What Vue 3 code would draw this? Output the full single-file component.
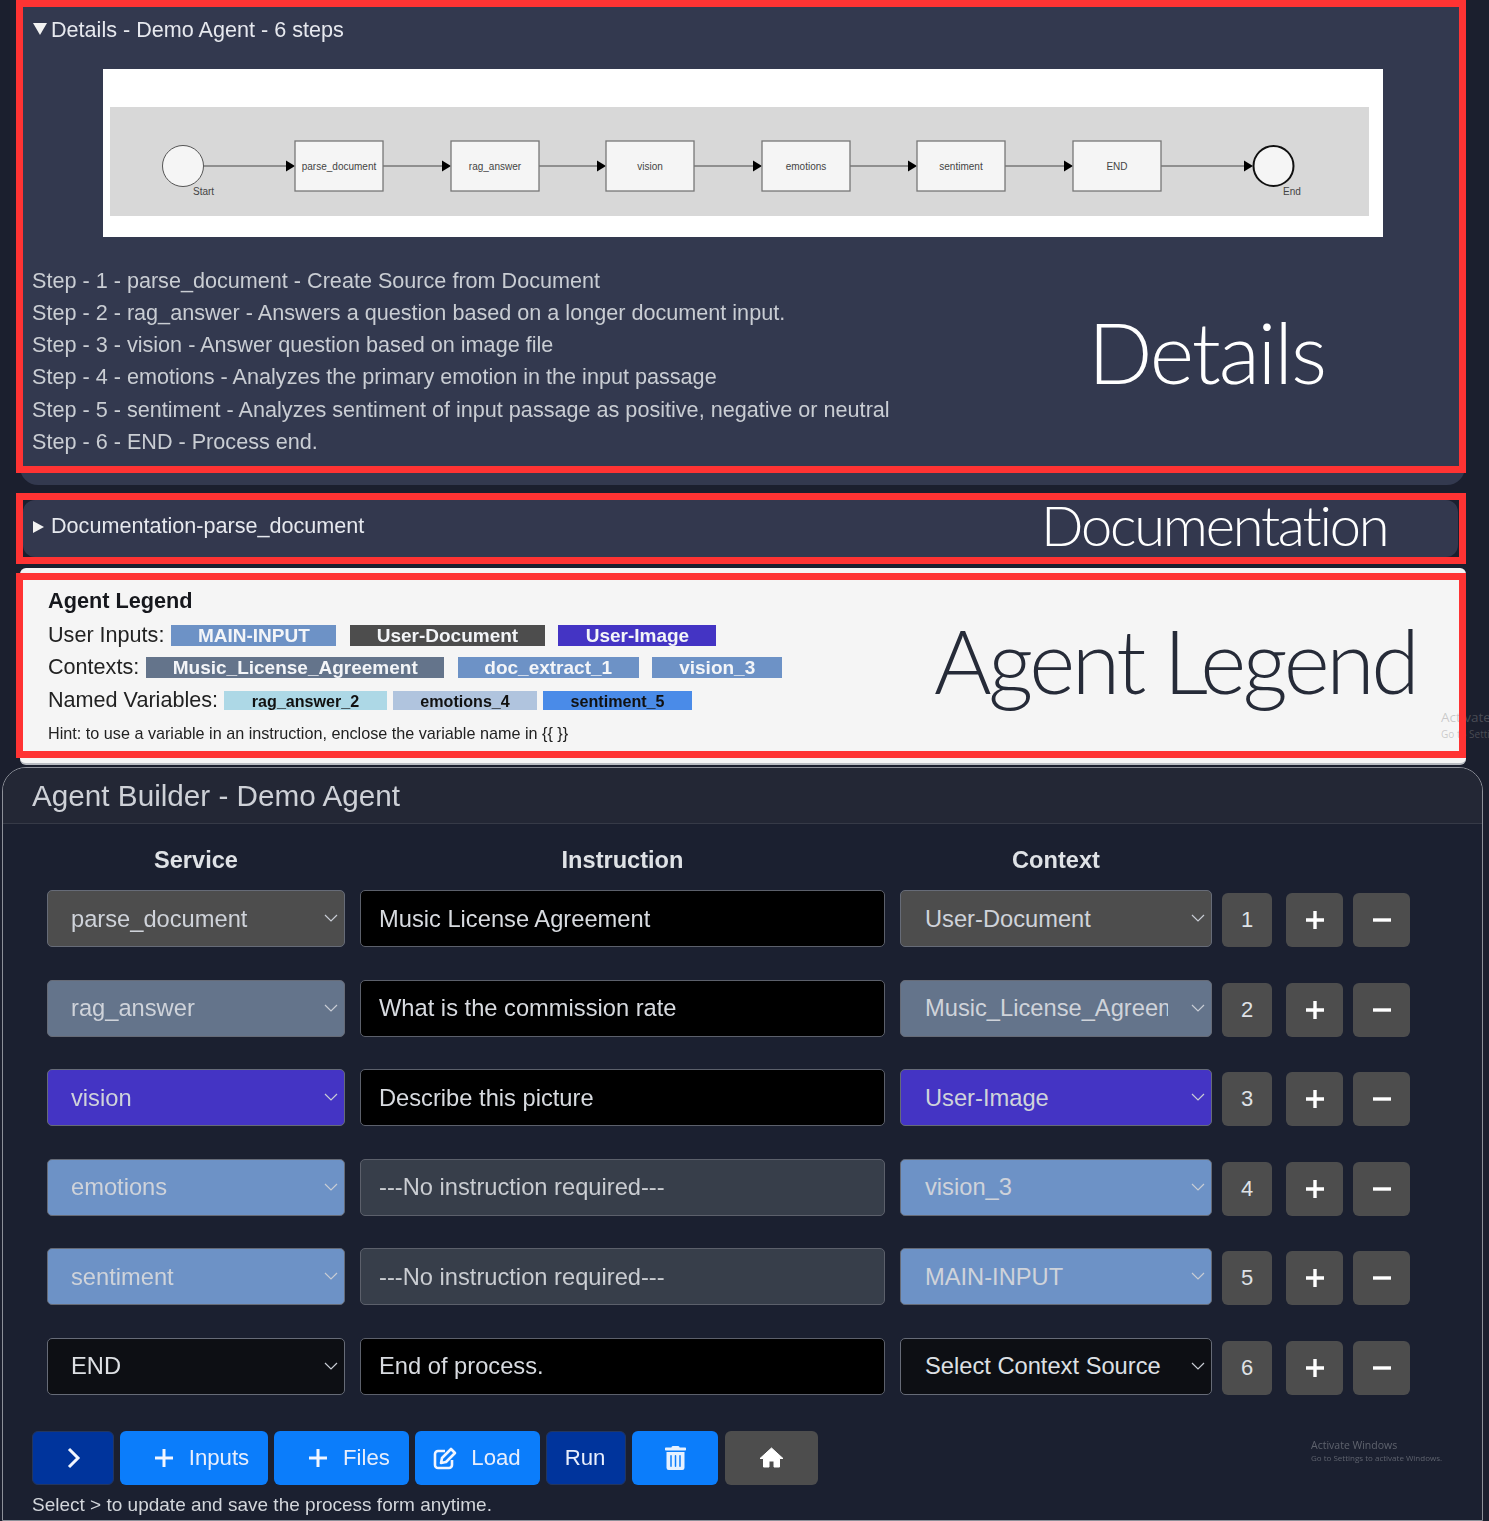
<script setup>
const hint = 'Hint: to use a variable in an instruction, enclose the variable name in {{ }}';

const steps = [
  'Step - 1 - parse_document - Create Source from Document',
  'Step - 2 - rag_answer - Answers a question based on a longer document input.',
  'Step - 3 - vision - Answer question based on image file',
  'Step - 4 - emotions - Analyzes the primary emotion in the input passage',
  'Step - 5 - sentiment - Analyzes sentiment of input passage as positive, negative or neutral',
  'Step - 6 - END - Process end.'
];

// tip = x where the arrow leaving the node ends
const nodes = [
  { name: 'parse_document', x: 192, tip: 348 },
  { name: 'rag_answer', x: 348, tip: 503 },
  { name: 'vision', x: 503, tip: 659 },
  { name: 'emotions', x: 659, tip: 814 },
  { name: 'sentiment', x: 814, tip: 970 },
  { name: 'END', x: 970, tip: 1150 }
];

const legend = [
  {
    label: 'User Inputs:',
    cls: 'row-one',
    chips: [
      { text: 'MAIN-INPUT', cls: 'blue', w: 165 },
      { text: 'User-Document', cls: 'grey', w: 195 },
      { text: 'User-Image', cls: 'violet', w: 158 }
    ]
  },
  {
    label: 'Contexts:',
    cls: 'row-one',
    chips: [
      { text: 'Music_License_Agreement', cls: 'slate', w: 298 },
      { text: 'doc_extract_1', cls: 'blue', w: 181 },
      { text: 'vision_3', cls: 'blue', w: 130 }
    ]
  },
  {
    label: 'Named Variables:',
    cls: 'row-three',
    chips: [
      { text: 'rag_answer_2', cls: 'light', w: 163 },
      { text: 'emotions_4', cls: 'steel', w: 144 },
      { text: 'sentiment_5', cls: 'bright', w: 149 }
    ]
  }
];

const rows = [
  { service: 'parse_document', sCls: 'grey', instruction: 'Music License Agreement', iCls: '', context: 'User-Document', cCls: 'grey' },
  { service: 'rag_answer', sCls: 'slate', instruction: 'What is the commission rate', iCls: '', context: 'Music_License_Agreement', cCls: 'slate' },
  { service: 'vision', sCls: 'violet', instruction: 'Describe this picture', iCls: '', context: 'User-Image', cCls: 'violet' },
  { service: 'emotions', sCls: 'blue', instruction: '---No instruction required---', iCls: 'off', context: 'vision_3', cCls: 'blue' },
  { service: 'sentiment', sCls: 'blue', instruction: '---No instruction required---', iCls: 'off', context: 'MAIN-INPUT', cCls: 'blue' },
  { service: 'END', sCls: 'dark', instruction: 'End of process.', iCls: '', context: 'Select Context Source', cCls: 'dark' }
];
</script>

<template>
  <div class="page">
    <section class="details soft">
      <div class="summary"><span class="tri-down"></span>Details - Demo Agent - 6 steps</div>
      <div class="diagram">
        <svg width="1280" height="168" viewBox="0 0 1280 168">
          <rect x="7" y="38" width="1259" height="109" fill="#d8d8d8" />
          <line x1="101" y1="97" x2="183" y2="97" class="edge" />
          <polygon points="183,91.5 192,97 183,102.5" />
          <circle cx="80" cy="97" r="20.5" fill="#f5f5f5" stroke="#555" stroke-width="1" />
          <text x="90" y="126" class="small">Start</text>
          <g v-for="n in nodes" :key="n.name">
            <rect :x="n.x" y="72" width="88" height="50" fill="#f5f5f5" stroke="#777" stroke-width="1.3" />
            <text :x="n.x + 44" y="101" text-anchor="middle" class="small">{{ n.name }}</text>
            <line :x1="n.x + 88" y1="97" :x2="n.tip - 9" y2="97" class="edge" />
            <polygon :points="`${n.tip - 9},91.5 ${n.tip},97 ${n.tip - 9},102.5`" />
          </g>
          <circle cx="1170.5" cy="97" r="20" fill="#f5f5f5" stroke="#111" stroke-width="2" />
          <text x="1180" y="126" class="small">End</text>
        </svg>
      </div>
      <div class="steps">
        <div v-for="s in steps" :key="s">{{ s }}</div>
      </div>
    </section>

    <section class="docs soft">
      <span class="tri-right"></span>Documentation-parse_document
    </section>

    <section class="legend soft">
      <div class="legend-title">Agent Legend</div>
      <div v-for="row in legend" :key="row.label" class="legend-row" :class="row.cls">
        <span class="legend-label">{{ row.label }}</span>
        <span
          v-for="chip in row.chips"
          :key="chip.text"
          class="chip"
          :class="chip.cls"
          :style="{ width: chip.w + 'px' }"
        >{{ chip.text }}</span>
      </div>
      <div class="hint">{{ hint }}</div>
    </section>

    <section class="builder soft">
      <div class="builder-head">Agent Builder - Demo Agent</div>
      <div class="builder-body">
        <div class="line columns">
          <div class="col-service">Service</div>
          <div class="col-instruction">Instruction</div>
          <div class="col-context">Context</div>
        </div>
        <div class="rows">
          <div v-for="(row, i) in rows" :key="i" class="line">
            <div class="pick col-service" :class="row.sCls">
              <select><option>{{ row.service }}</option></select>
              <svg class="chev" width="14" height="8" viewBox="0 0 14 8"><path d="M1 1l6 6 6-6" /></svg>
            </div>
            <input class="field col-instruction" :class="row.iCls" :value="row.instruction" />
            <div class="pick col-context" :class="row.cCls">
              <select><option>{{ row.context }}</option></select>
              <svg class="chev" width="14" height="8" viewBox="0 0 14 8"><path d="M1 1l6 6 6-6" /></svg>
            </div>
            <div class="tile num">{{ i + 1 }}</div>
            <button class="tile act">
              <svg width="20" height="20" viewBox="0 0 20 20"><path d="M10 1v18M1 10h18" /></svg>
            </button>
            <button class="tile act minus">
              <svg width="20" height="20" viewBox="0 0 20 20"><path d="M1 10h18" /></svg>
            </button>
          </div>
        </div>
        <div class="actions">
          <button class="btn navy next">
            <svg width="14" height="22" viewBox="0 0 14 22"><path d="M2 2l9 9-9 9" /></svg>
          </button>
          <button class="btn blue-btn inputs">
            <svg width="20" height="20" viewBox="0 0 20 20"><path d="M10 1v18M1 10h18" /></svg>Inputs
          </button>
          <button class="btn blue-btn files">
            <svg width="20" height="20" viewBox="0 0 20 20"><path d="M10 1v18M1 10h18" /></svg>Files
          </button>
          <button class="btn blue-btn load">
            <svg width="24" height="24" viewBox="0 0 24 24">
              <path class="thin" d="M19 14v5a3 3 0 0 1-3 3H5a3 3 0 0 1-3-3V8a3 3 0 0 1 3-3h7" />
              <path class="thin" d="M9 12l-1 5 5-1L22 7l-4-4z" />
            </svg>Load
          </button>
          <button class="btn navy run">Run</button>
          <button class="btn blue-btn trash">
            <svg width="21" height="24" viewBox="0 0 448 512"><path fill="#e6f1ff" d="M32 464a48 48 0 0 0 48 48h288a48 48 0 0 0 48-48V128H32zm272-256a16 16 0 0 1 32 0v224a16 16 0 0 1-32 0zm-96 0a16 16 0 0 1 32 0v224a16 16 0 0 1-32 0zm-96 0a16 16 0 0 1 32 0v224a16 16 0 0 1-32 0zM432 32H312l-9.4-18.7A24 24 0 0 0 281.1 0H166.8a23.72 23.72 0 0 0-21.4 13.3L136 32H16A16 16 0 0 0 0 48v32a16 16 0 0 0 16 16h416a16 16 0 0 0 16-16V48a16 16 0 0 0-16-16z" /></svg>
          </button>
          <button class="btn home">
            <svg width="25" height="21" viewBox="0 0 25 21"><path fill="#fff" stroke="#fff" stroke-width="1" stroke-linejoin="round" d="M12.5 1L1 11.5h3.5V20h5.5v-6h5v6h5.500V11.500H24z" /></svg>
          </button>
        </div>
        <div class="caption">Select &gt; to update and save the process form anytime.</div>
      </div>
    </section>

    <!-- windows watermark and the annotation frames sit over the screenshot -->
    <div class="watermark wm-top"><b>Activate Windows</b><br />Go to Settings to activate Windows.</div>
    <div class="watermark wm-bottom"><b>Activate Windows</b><br />Go to Settings to activate Windows.</div>

    <div class="frame frame-details"></div>
    <div class="frame frame-docs"></div>
    <div class="frame frame-legend"></div>
    <div class="big big-details">Details</div>
    <div class="big big-docs">Documentation</div>
    <div class="big big-legend">Agent Legend</div>
  </div>
</template>

<style>
html, body {
  background: #1b1f2e;
}
</style>

<style scoped>
.page {
  position: relative;
  width: 1489px;
  height: 1521px;
  overflow: hidden;
  background: #1b1f2e;
  font-family: "Liberation Sans", Arial, sans-serif;
}

/* the screenshot under the annotations is slightly out of focus */
.soft {
  filter: blur(0.45px);
}

.details {
  width: 1445px;
  height: 485px;
  margin-left: 20px;
  padding: 15px 0 0 12px;
  box-sizing: border-box;
  background: #33394f;
  border-radius: 0 0 18px 18px;
  color: #c9cdd3;
}
.summary {
  height: 30px;
  line-height: 30px;
  font-size: 21.6px;
  color: #e6e8ee;
}
.tri-down {
  display: inline-block;
  width: 0;
  height: 0;
  margin: 0 4px 2px 1px;
  border-left: 7px solid transparent;
  border-right: 7px solid transparent;
  border-top: 12px solid #f2f2f2;
}
.diagram {
  width: 1280px;
  height: 168px;
  margin: 24px 0 0 71px;
  background: #fff;
}
.diagram svg {
  display: block;
}
.edge {
  stroke: #777;
  stroke-width: 1.6;
}
.small {
  font-size: 10px;
  fill: #444;
}
.steps {
  margin-top: 27.5px;
  font-size: 21.62px;
  line-height: 32.3px;
}

.docs {
  width: 1435px;
  height: 57px;
  margin: 15px 0 0 23px;
  padding-left: 9px;
  box-sizing: border-box;
  background: #33384e;
  border-radius: 12px;
  line-height: 52px;
  font-size: 21.6px;
  color: #e6e8ee;
}
.tri-right {
  display: inline-block;
  width: 0;
  height: 0;
  margin: 0 7px 0 1px;
  border-top: 6.5px solid transparent;
  border-bottom: 6.5px solid transparent;
  border-left: 11px solid #f2f2f2;
}

.legend {
  width: 1446px;
  height: 197px;
  margin: 11px 0 0 20px;
  padding: 17px 0 0 28px;
  box-sizing: border-box;
  background: #f5f5f5;
  border-radius: 6px;
  border-bottom: 2px solid #b9bcc2;
  color: #222;
}
.legend-title {
  height: 32px;
  line-height: 32px;
  font-size: 21.7px;
  font-weight: 700;
  color: #16181d;
  margin-bottom: 2px;
}
.legend-row {
  display: flex;
  align-items: center;
  height: 32px;
}
.legend-label {
  font-size: 21.6px;
  margin-right: 7px;
}
.chip {
  display: block;
  text-align: center;
  color: #f3f5f8;
  font-weight: 700;
}
.row-one .chip {
  height: 21px;
  line-height: 21px;
  font-size: 19px;
  margin-right: 13.5px;
}
.row-three {
  margin: 1px 0 1px;
}
.row-three .legend-label {
  margin-right: 6px;
}
.row-three .chip {
  height: 19px;
  line-height: 20px;
  font-size: 16.1px;
  margin-right: 6px;
  color: #111;
}
.hint {
  height: 32px;
  line-height: 32px;
  font-size: 16.2px;
}

.grey { background: #4d4d4d; }
.slate { background: #64748b; }
.violet { background: #4434c4; }
.blue { background: #6d92c6; }
.dark { background: #0d0f14; }
.light { background: #add8e6; }
.steel { background: #b0c4de; }
.bright { background: #4a8be8; }

.builder {
  width: 1481px;
  height: 754px;
  margin: 2px 0 0 2px;
  box-sizing: border-box;
  border: 1px solid #8d9099;
  border-radius: 24px 24px 0 0;
  background: #1b2030;
  overflow: hidden;
  color: #d8dbe0;
}
.builder-head {
  height: 56px;
  line-height: 55px;
  padding-left: 29px;
  box-sizing: border-box;
  background: #232735;
  border-bottom: 1px solid #363a47;
  font-size: 29.7px;
  color: #ced1d7;
}
.builder-body {
  padding: 22px 0 0 44px;
}
.line {
  display: flex;
}
.columns {
  height: 28px;
  line-height: 28px;
  margin-bottom: 16px;
  font-size: 23.6px;
  font-weight: 700;
  text-align: center;
  color: #dfe2e6;
}
.col-service {
  width: 298px;
  margin-right: 15px;
}
.col-instruction {
  width: 525px;
  margin-right: 15px;
}
.col-context {
  width: 312px;
}
.rows {
  display: flex;
  flex-direction: column;
  gap: 32.6px;
}
.rows .line {
  height: 57px;
}
.pick {
  position: relative;
  height: 57px;
  box-sizing: border-box;
  border: 1px solid #666b77;
  border-radius: 5px;
  overflow: hidden;
}
.pick select {
  display: block;
  width: 100%;
  height: 100%;
  padding: 0 43px 0 24px;
  border: none;
  outline: none;
  background: transparent;
  appearance: none;
  font-family: inherit;
  font-size: 23.7px;
  color: #cfd3da;
}
.pick.col-service select {
  padding-left: 23px;
}
.pick.dark select {
  color: #dde0e4;
}
.chev {
  position: absolute;
  right: 6px;
  top: 23px;
  fill: none;
  stroke: #c8ccd4;
  stroke-width: 1.2;
}
.field {
  height: 57px;
  box-sizing: border-box;
  padding: 1px 18px 0;
  border: 1px solid #5c606b;
  border-radius: 5px;
  outline: none;
  background: #000;
  font-family: inherit;
  font-size: 23.7px;
  color: #d8dbe0;
}
.field.off {
  background: #373e4a;
  color: #c9ccd1;
}
.tile {
  height: 54px;
  margin-top: 3px;
  border: none;
  border-radius: 6px;
  background: #4d4d4d;
  display: flex;
  align-items: center;
  justify-content: center;
  padding: 0;
}
.tile svg {
  fill: none;
  stroke: #fff;
  stroke-width: 3.4;
}
.num {
  width: 50px;
  margin-left: 10px;
  font-size: 22px;
  color: #dfe2e6;
}
.act {
  width: 57px;
  margin-left: 14px;
}
.act.minus {
  margin-left: 10px;
}
.actions {
  display: flex;
  gap: 6px;
  margin: 36px 0 0 -15px;
}
.btn {
  height: 54px;
  display: flex;
  align-items: center;
  justify-content: center;
  padding: 0;
  border: 1px solid transparent;
  border-radius: 6px;
  font-family: inherit;
  font-size: 22.2px;
  color: #e8eefc;
}
.btn svg {
  fill: none;
  stroke: #f2f6ff;
  stroke-width: 3;
}
.btn svg .thin {
  stroke-width: 2.6;
  stroke-linejoin: round;
}
.navy {
  background: #00349c;
  border-color: #23365f;
}
.blue-btn {
  background: #0b7dfb;
}
.next { width: 82px; padding-left: 2px; }
.inputs { width: 148px; padding-left: 15px; }
.files { width: 135px; padding-left: 15px; }
.load { width: 125px; padding-right: 1px; }
.run { width: 80px; padding-right: 2px; }
.trash { width: 86px; }
.trash svg { stroke: none; }
.home {
  width: 93px;
  margin-left: 1px;
  background: #4d4d4d;
}
.home svg { stroke: none; }
.inputs svg, .files svg {
  margin-right: 15px;
}
.load svg {
  margin-right: 14px;
}
.caption {
  margin: 8px 0 0 -15px;
  height: 24px;
  line-height: 24px;
  font-size: 19px;
  color: #d3d6db;
}

.watermark {
  position: absolute;
  font-family: "Open Sans", sans-serif;
  color: rgba(140, 140, 140, 0.42);
  white-space: nowrap;
}
.watermark b {
  font-weight: 400;
}
.wm-top {
  left: 1441px;
  top: 709px;
  font-size: 10px;
  line-height: 16px;
}
.wm-top b {
  font-size: 13.5px;
}
.wm-bottom {
  left: 1311px;
  top: 1439px;
  font-size: 8px;
  line-height: 12px;
  color: #5f636e;
}
.wm-bottom b {
  font-size: 10.5px;
}

.frame {
  position: absolute;
  left: 16px;
  width: 1450px;
  box-sizing: border-box;
  border: 7px solid #ff3333;
}
.frame-details { top: 0; height: 473px; }
.frame-docs { top: 493px; height: 71px; }
.frame-legend { top: 573px; height: 185px; }

.big {
  position: absolute;
  font-family: Lato, sans-serif;
  font-weight: 300;
  line-height: 1;
  white-space: nowrap;
}
.big-details {
  left: 1088px;
  top: 309px;
  font-size: 85px;
  letter-spacing: -2.2px;
  color: #fff;
}
.big-docs {
  left: 1041px;
  top: 497px;
  font-size: 56px;
  letter-spacing: -2.2px;
  color: #fff;
}
.big-legend {
  left: 934px;
  top: 616px;
  font-size: 88px;
  letter-spacing: -3.4px;
  color: #262b38;
}
</style>
